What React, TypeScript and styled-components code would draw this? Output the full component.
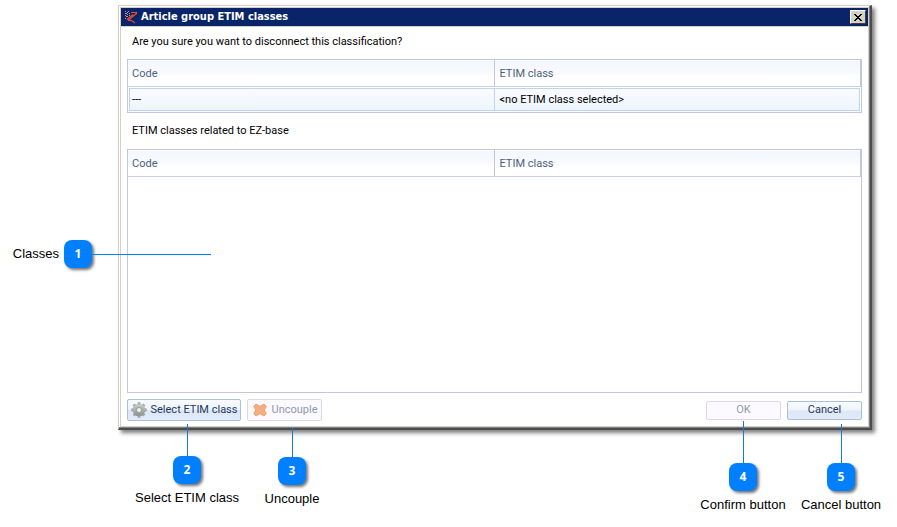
import React from "react";
import styled, { createGlobalStyle } from "styled-components";

const GlobalStyle = createGlobalStyle`
  *, *::before, *::after { box-sizing: border-box; }
  body { margin: 0; background: #fff; color: #000; font-family: "Liberation Sans", Arial, sans-serif; }
`;

const uiFont = `Roboto, Tahoma, sans-serif`;

const Figure = styled.main`
  padding: 5px 25px 80px 118px;
`;

const Dialog = styled.section`
  border: solid;
  border-width: 1px 2px 2px 1px;
  border-color: #d4d0c8 #4c4c4c #4c4c4c #d4d0c8;
  padding: 1px;
  background: #fff;
  box-shadow: inset -1px -1px #808080, 3px 3px 4px rgba(0, 0, 0, 0.5);
  font-family: ${uiFont};
  font-size: 11px;
  line-height: 16px;
`;

const Inner = styled.div`
  border: 1px solid #d4d0c8;
`;

const TitleBar = styled.header`
  display: flex;
  align-items: center;
  gap: 3px;
  height: 19px;
  padding: 0 2px 0 3px;
  background: #0a246a;
  border-bottom: 1px solid #d4d0c8;
  color: #fff;
`;

const Title = styled.h1`
  flex: 1;
  margin: 0;
  font-family: "DejaVu Sans Condensed", "DejaVu Sans", Tahoma, sans-serif;
  font-size: 11px;
  line-height: 16px;
  font-weight: 700;
`;

const CloseButton = styled.button`
  display: grid;
  place-items: center;
  width: 16px;
  height: 14px;
  padding: 0;
  border: 1px solid;
  border-color: #fff #404040 #404040 #fff;
  background: #d4d0c8;
  color: #000;
`;

const Body = styled.div`
  padding: 7px 6px 5px;
`;

const Message = styled.p`
  margin: 0;
  padding: 0 5px;
`;

const Panel = styled.div<{ $tall?: boolean }>`
  position: relative;
  margin: ${(p) => (p.$tall ? "10px 0 6px" : "9px 0 10px")};
  min-height: ${(p) => (p.$tall ? "244px" : "54px")};
  border: 1px solid #c3c7dc;
`;

const Table = styled.table`
  width: 100%;
  table-layout: fixed;
  border-collapse: separate;
  border-spacing: 0;
`;

const HeadCell = styled.th`
  height: 27px;
  padding: 2px 5px 0;
  border-right: 1px solid #c3c7dc;
  border-bottom: 1px solid #c8d2e4;
  background: linear-gradient(#f2f6fe, #fafbff 55%, #fff 60%);
  box-shadow: inset 0 1px #fff;
  color: #4b627c;
  font-weight: 400;
  text-align: left;
  &:first-child { padding-left: 4px; }
`;

const Cell = styled.td`
  height: 25px;
  padding: 1px 5px 0;
  border: solid #fff;
  border-width: 1px 0;
  background: linear-gradient(#fbfcff, #edf4fd) padding-box;
  box-shadow: inset -1px 0 #bdd5f5, inset 0 1px #bdd5f5, inset 0 -1px #bdd5f5;
  &:first-child {
    border-left-width: 1px;
    padding-left: 3px;
    box-shadow: inset 0 0 0 1px #bdd5f5;
  }
  &:last-child { border-right-width: 1px; }
`;

const Actions = styled.footer`
  display: flex;
  align-items: center;
  gap: 6px;
`;

const Anchor = styled.div<{ $end?: boolean }>`
  position: relative;
  margin-left: ${(p) => (p.$end ? "auto" : "0")};
`;

const PushButton = styled.button<{ $wide?: boolean; $slim?: boolean }>`
  display: flex;
  align-items: center;
  justify-content: center;
  gap: 4px;
  width: ${(p) => (p.$wide ? "114px" : "75px")};
  height: ${(p) => (p.$slim ? "19px" : "22px")};
  padding: 0;
  border: 1px solid #a9c0dc;
  border-radius: 2px;
  background: linear-gradient(#f8fbff, #eff4fc 48%, #dce7f6 52%, #e2ebf8);
  color: #1e395b;
  font-family: ${uiFont};
  font-size: 11px;
  line-height: 16px;
  white-space: nowrap;
  &:disabled {
    border-color: #ddd8e2;
    background: #fdfaff;
    color: #8d99ab;
  }
`;

const Pin = styled.div<{ $x: number; $y: number }>`
  position: absolute;
  left: ${(p) => p.$x}px;
  top: ${(p) => p.$y}px;
  display: flex;
  flex-direction: column;
  align-items: center;
  width: 120px;
  margin-left: -60px;
`;

const SidePin = styled.div`
  position: absolute;
  top: 90px;
  right: calc(100% - 83px);
  display: flex;
  align-items: center;
`;

const Stem = styled.span<{ $length: number }>`
  width: 1px;
  height: ${(p) => p.$length}px;
  background: #1478dc;
`;

const Lead = styled.span`
  width: 119px;
  height: 1px;
  background: #0080ff;
`;

const Badge = styled.span`
  display: grid;
  place-items: center;
  width: 28px;
  height: 28px;
  border-radius: 8px;
  background: #0080ff;
  box-shadow: 2px 2px 3px rgba(0, 0, 0, 0.55);
  color: #fff;
  font: 700 12px/16px "Open Sans", Arial, sans-serif;
`;

const PinLabel = styled.span<{ $side?: boolean }>`
  margin: ${(p) => (p.$side ? "0 5px 0 0" : "6px 0 0")};
  color: #000;
  font: 13px/16px "Liberation Sans", Arial, sans-serif;
  white-space: nowrap;
`;

function Logo() {
  return (
    <svg width="14" height="14" viewBox="0 0 14 14" aria-hidden="true">
      <path d="M7 2.5H13M13 3 4 10.5M9 4.5 3 9.5M4 10.5H7.5L11 13" fill="none" stroke="#f04a30" strokeWidth="1.1" />
      <path
        d="M1 1h1v1H1zM4 1h1v1H4zM3 2h1v1H3zM1 3h2v1H1zM5 3h1v1H5zM3 4h1v1H3zM1 5h1v1H1zM5 5h1v1H5zM2 6h2v1H2zM1 8h1v1H1z"
        fill="#d98a8c"
      />
    </svg>
  );
}

function Gear() {
  return (
    <svg width="16" height="16" viewBox="0 0 16 16" aria-hidden="true">
      <defs>
        <linearGradient id="gear" x2="0" y2="1">
          <stop stopColor="#c2c7c3" />
          <stop offset="1" stopColor="#929995" />
        </linearGradient>
      </defs>
      <g stroke="#a0a6a2" strokeWidth="2.8">
        <path d="M8 .3v15.4M.3 8h15.4M2.6 2.6l10.8 10.8M13.4 2.6 2.6 13.4" />
      </g>
      <circle cx="8" cy="8" r="4.5" fill="none" stroke="url(#gear)" strokeWidth="3.6" />
      <circle cx="8" cy="8" r="2.5" fill="#eef2f5" stroke="#858a88" strokeWidth=".7" />
    </svg>
  );
}

function OrangeCross() {
  return (
    <svg width="16" height="16" viewBox="0 0 16 16" aria-hidden="true">
      <path
        d="M4 2 8 4.4 12 2l2.3 2.5L12.2 8l2.1 3.5L12 14l-4-2.4L4 14l-2.3-2.5L3.8 8 1.7 4.5z"
        fill="#f5ad7d"
        stroke="#eea173"
        strokeLinejoin="round"
      />
    </svg>
  );
}

function Callout({ n, label, x, y, length }: { n: number; label: string; x: number; y: number; length: number }) {
  return (
    <Pin $x={x} $y={y}>
      <Stem $length={length} />
      <Badge>{n}</Badge>
      <PinLabel>{label}</PinLabel>
    </Pin>
  );
}

function ClassTable({ rows, label }: { rows: string[][]; label: string }) {
  return (
    <Table aria-label={label}>
      <thead>
        <tr>
          <HeadCell scope="col">Code</HeadCell>
          <HeadCell scope="col">ETIM class</HeadCell>
        </tr>
      </thead>
      <tbody>
        {rows.map(([code, name]) => (
          <tr key={code}>
            <Cell>{code}</Cell>
            <Cell>{name}</Cell>
          </tr>
        ))}
      </tbody>
    </Table>
  );
}

export default function App() {
  return (
    <>
      <GlobalStyle />
      <Figure>
        <Dialog role="dialog" aria-labelledby="dialog-title">
          <Inner>
            <TitleBar>
              <Logo />
              <Title id="dialog-title">Article group ETIM classes</Title>
              <CloseButton type="button" aria-label="Close">
                <svg width="8" height="7" viewBox="0 0 8 7" shapeRendering="crispEdges" aria-hidden="true">
                  <path
                    d="M0 0h2v1H0zM6 0h2v1H6zM1 1h2v1H1zM5 1h2v1H5zM2 2h4v1H2zM3 3h2v1H3zM2 4h4v1H2zM1 5h2v1H1zM5 5h2v1H5zM0 6h2v1H0zM6 6h2v1H6z"
                    fill="#000"
                  />
                </svg>
              </CloseButton>
            </TitleBar>
            <Body>
              <Message>Are you sure you want to disconnect this classification?</Message>
              <Panel>
                <ClassTable label="Selected classification" rows={[["---", "<no ETIM class selected>"]]} />
              </Panel>
              <Message>ETIM classes related to EZ-base</Message>
              <Panel $tall>
                <ClassTable label="ETIM classes related to EZ-base" rows={[]} />
                <SidePin>
                  <PinLabel $side>Classes</PinLabel>
                  <Badge>1</Badge>
                  <Lead />
                </SidePin>
              </Panel>
              <Actions>
                <Anchor>
                  <PushButton type="button" $wide>
                    <Gear />
                    Select ETIM class
                  </PushButton>
                  <Callout n={2} label="Select ETIM class" x={60} y={25} length={32} />
                </Anchor>
                <Anchor>
                  <PushButton type="button" disabled>
                    <OrangeCross />
                    Uncouple
                  </PushButton>
                  <Callout n={3} label="Uncouple" x={45} y={29} length={29} />
                </Anchor>
                <Anchor $end>
                  <PushButton type="button" $slim disabled>
                    OK
                  </PushButton>
                  <Callout n={4} label="Confirm button" x={37} y={20} length={42} />
                </Anchor>
                <Anchor>
                  <PushButton type="button" $slim>
                    Cancel
                  </PushButton>
                  <Callout n={5} label="Cancel button" x={54} y={23} length={39} />
                </Anchor>
              </Actions>
            </Body>
          </Inner>
        </Dialog>
      </Figure>
    </>
  );
}
